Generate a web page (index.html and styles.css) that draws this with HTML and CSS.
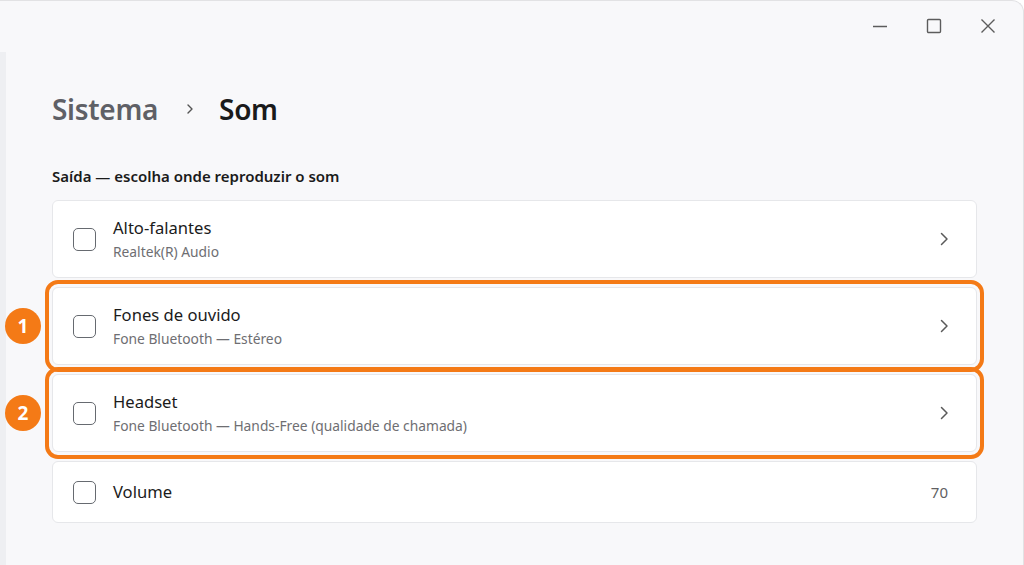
FILE: index.html
```html
<!DOCTYPE html>
<html lang="pt-BR">
<head>
<meta charset="utf-8">
<title>Som</title>
<link rel="stylesheet" href="styles.css">
</head>
<body>
<div class="window">
  <div class="titlebar">
    <button class="ctl" aria-label="Minimizar">
      <svg width="16" height="16" viewBox="0 0 16 16"><path d="M1 8.5h14" stroke="#5c5c5c" stroke-width="1.3" fill="none"/></svg>
    </button>
    <button class="ctl" aria-label="Maximizar">
      <svg width="16" height="16" viewBox="0 0 16 16"><rect x="1.5" y="1.5" width="13" height="13" rx="1" stroke="#5c5c5c" stroke-width="1.4" fill="none"/></svg>
    </button>
    <button class="ctl" aria-label="Fechar">
      <svg width="16" height="16" viewBox="0 0 16 16"><path d="M1.5 1.5l13 13M14.5 1.5l-13 13" stroke="#5c5c5c" stroke-width="1.4" fill="none"/></svg>
    </button>
  </div>
  <div class="main">
    <div class="strip"></div>
    <div class="content">
      <div class="crumbs">
        <span class="crumb-parent">Sistema</span>
        <svg class="crumb-sep" width="10" height="12" viewBox="0 0 10 12"><path d="M3 2l4 4-4 4" stroke="#555" stroke-width="1.4" fill="none" stroke-linecap="round" stroke-linejoin="round"/></svg>
        <span class="crumb-current">Som</span>
      </div>
      <div class="section-title">Saída — escolha onde reproduzir o som</div>
      <div class="list">
        <div class="card">
          <span class="check"></span>
          <div class="text">
            <div class="title">Alto-falantes</div>
            <div class="sub">Realtek(R) Audio</div>
          </div>
          <svg class="chev" width="12" height="16" viewBox="0 0 12 16"><path d="M3.5 2.5l5.5 5.5-5.5 5.5" stroke="#5a5a5a" stroke-width="1.5" fill="none" stroke-linecap="round" stroke-linejoin="round"/></svg>
        </div>
        <div class="card marked">
          <span class="badge">1</span>
          <span class="check"></span>
          <div class="text">
            <div class="title">Fones de ouvido</div>
            <div class="sub">Fone Bluetooth — Estéreo</div>
          </div>
          <svg class="chev" width="12" height="16" viewBox="0 0 12 16"><path d="M3.5 2.5l5.5 5.5-5.5 5.5" stroke="#5a5a5a" stroke-width="1.5" fill="none" stroke-linecap="round" stroke-linejoin="round"/></svg>
        </div>
        <div class="card marked">
          <span class="badge">2</span>
          <span class="check"></span>
          <div class="text">
            <div class="title">Headset</div>
            <div class="sub">Fone Bluetooth — Hands-Free (qualidade de chamada)</div>
          </div>
          <svg class="chev" width="12" height="16" viewBox="0 0 12 16"><path d="M3.5 2.5l5.5 5.5-5.5 5.5" stroke="#5a5a5a" stroke-width="1.5" fill="none" stroke-linecap="round" stroke-linejoin="round"/></svg>
        </div>
        <div class="card short">
          <span class="check"></span>
          <div class="text">
            <div class="title">Volume</div>
          </div>
          <span class="value">70</span>
        </div>
      </div>
    </div>
  </div>
</div>
</body>
</html>
```
FILE: styles.css
```css
* { box-sizing: border-box; }
html, body {
  margin: 0;
  padding: 0;
  background: #ffffff;
  font-family: "Noto Sans", "Open Sans", sans-serif;
}
.window {
  width: 1024px;
  height: 565px;
  background: #f8f8fa;
  border-top: 1px solid #e2e2e4;
  border-right: 1px solid #e2e2e4;
  border-top-right-radius: 12px;
  overflow: hidden;
  display: flex;
  flex-direction: column;
}
.titlebar {
  height: 51px;
  display: flex;
  justify-content: flex-end;
  align-items: center;
  padding-right: 27px;
  gap: 38px;
}
.ctl {
  border: 0;
  background: transparent;
  padding: 0;
  width: 16px;
  height: 16px;
  display: flex;
  margin-top: -1px;
}
.main {
  flex: 1;
  display: flex;
}
.strip {
  width: 6px;
  background: #eeeff2;
}
.content {
  flex: 1;
  padding-left: 46px;
  padding-right: 46px;
}
.crumbs {
  margin-top: 37px;
  height: 40px;
  display: flex;
  align-items: center;
}
.crumb-parent {
  font-size: 28px;
  font-weight: 600;
  color: #5f6066;
  letter-spacing: -0.3px;
}
.crumb-sep {
  margin-left: 27px;
  margin-right: 24px;
}
.crumb-current {
  font-size: 28px;
  font-weight: 600;
  color: #1a1a1a;
  letter-spacing: -0.3px;
}
.section-title {
  margin-top: 37px;
  font-size: 15px;
  line-height: 20px;
  font-weight: 600;
  color: #1b1b1b;
}
.list {
  margin-top: 14px;
  display: flex;
  flex-direction: column;
  gap: 9px;
}
.card {
  position: relative;
  height: 78px;
  background: #ffffff;
  border: 1px solid #e6e7ea;
  border-radius: 6px;
  display: flex;
  align-items: center;
  padding-left: 20px;
  padding-right: 26px;
}
.card.short { height: 62px; }
.card.marked {
  outline: 4px solid #f47a16;
  outline-offset: 3px;
}
.check {
  width: 23px;
  height: 23px;
  border: 1.6px solid #666a70;
  border-radius: 5px;
  flex: none;
}
.text {
  flex: 1;
  margin-left: 17px;
}
.title {
  font-size: 16.6px;
  line-height: 22px;
  color: #1b1b1b;
}
.sub {
  font-size: 13.8px;
  line-height: 18px;
  margin-top: 4px;
  color: #6e6e72;
}
.chev { flex: none; }
.value {
  font-size: 15px;
  color: #5f5f63;
  margin-right: 2px;
}
.badge {
  position: absolute;
  left: -48px;
  top: 50%;
  margin-top: -18px;
  width: 36px;
  height: 36px;
  border-radius: 50%;
  background: #f47a16;
  color: #fff;
  font-weight: 700;
  font-size: 19px;
  display: flex;
  align-items: center;
  justify-content: center;
}
```
